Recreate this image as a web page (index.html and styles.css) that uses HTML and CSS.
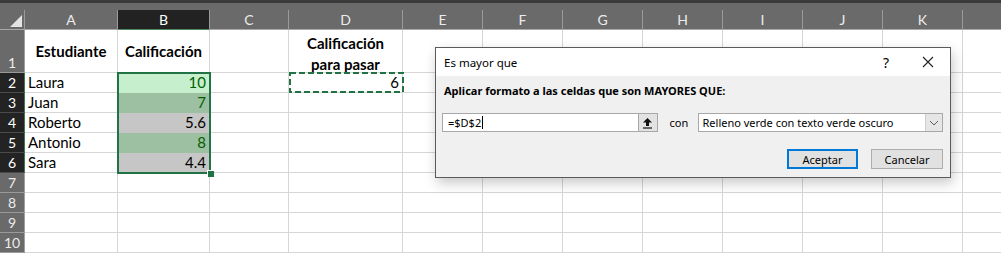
FILE: index.html
```html
<!DOCTYPE html>
<html>
<head>
<meta charset="utf-8">
<link rel="stylesheet" href="styles.css">
</head>
<body>
<div class="topbar"></div>
<div class="colheads">
  <div class="ch corner"><svg width="25" height="20" viewBox="0 0 25 20"><polygon points="10,17 22,17 22,5" fill="#e4e4e4"/></svg></div>
  <div class="ch">A</div>
  <div class="ch sel">B</div>
  <div class="ch">C</div>
  <div class="ch">D</div>
  <div class="ch">E</div>
  <div class="ch">F</div>
  <div class="ch">G</div>
  <div class="ch">H</div>
  <div class="ch">I</div>
  <div class="ch">J</div>
  <div class="ch">K</div>
  <div class="ch last"></div>
</div>
<div class="grid">
  <div class="rh r1">1</div>
  <div class="c bold mid">Estudiante</div>
  <div class="c bold mid">Calificación</div>
  <div class="c"></div>
  <div class="c bold mid wrap">Calificación para pasar</div>
  <div class="c"></div><div class="c"></div><div class="c"></div><div class="c"></div><div class="c"></div><div class="c"></div><div class="c"></div><div class="c last"></div>

  <div class="rh dark">2</div>
  <div class="c">Laura</div>
  <div class="c num g1">10</div>
  <div class="c"></div>
  <div class="c num">6</div>
  <div class="c"></div><div class="c"></div><div class="c"></div><div class="c"></div><div class="c"></div><div class="c"></div><div class="c"></div><div class="c last"></div>

  <div class="rh dark">3</div>
  <div class="c">Juan</div>
  <div class="c num g2">7</div>
  <div class="c"></div><div class="c"></div>
  <div class="c"></div><div class="c"></div><div class="c"></div><div class="c"></div><div class="c"></div><div class="c"></div><div class="c"></div><div class="c last"></div>

  <div class="rh dark">4</div>
  <div class="c">Roberto</div>
  <div class="c num gr">5.6</div>
  <div class="c"></div><div class="c"></div>
  <div class="c"></div><div class="c"></div><div class="c"></div><div class="c"></div><div class="c"></div><div class="c"></div><div class="c"></div><div class="c last"></div>

  <div class="rh dark">5</div>
  <div class="c">Antonio</div>
  <div class="c num g2">8</div>
  <div class="c"></div><div class="c"></div>
  <div class="c"></div><div class="c"></div><div class="c"></div><div class="c"></div><div class="c"></div><div class="c"></div><div class="c"></div><div class="c last"></div>

  <div class="rh dark">6</div>
  <div class="c">Sara</div>
  <div class="c num gr">4.4</div>
  <div class="c"></div><div class="c"></div>
  <div class="c"></div><div class="c"></div><div class="c"></div><div class="c"></div><div class="c"></div><div class="c"></div><div class="c"></div><div class="c last"></div>

  <div class="rh">7</div>
  <div class="c"></div><div class="c"></div><div class="c"></div><div class="c"></div>
  <div class="c"></div><div class="c"></div><div class="c"></div><div class="c"></div><div class="c"></div><div class="c"></div><div class="c"></div><div class="c last"></div>

  <div class="rh">8</div>
  <div class="c"></div><div class="c"></div><div class="c"></div><div class="c"></div>
  <div class="c"></div><div class="c"></div><div class="c"></div><div class="c"></div><div class="c"></div><div class="c"></div><div class="c"></div><div class="c last"></div>

  <div class="rh">9</div>
  <div class="c"></div><div class="c"></div><div class="c"></div><div class="c"></div>
  <div class="c"></div><div class="c"></div><div class="c"></div><div class="c"></div><div class="c"></div><div class="c"></div><div class="c"></div><div class="c last"></div>

  <div class="rh">10</div>
  <div class="c"></div><div class="c"></div><div class="c"></div><div class="c"></div>
  <div class="c"></div><div class="c"></div><div class="c"></div><div class="c"></div><div class="c"></div><div class="c"></div><div class="c"></div><div class="c last"></div>
</div>

<div class="selection"><div class="handle"></div></div>
<svg class="ants" width="115" height="21" viewBox="0 0 115 21"><rect x="1" y="1" width="113" height="19" fill="none" stroke="#217346" stroke-width="2" stroke-dasharray="6 3"/></svg>

<div class="dialog">
  <div class="title">
    <span class="title-text">Es mayor que</span>
    <span class="help">?</span>
    <svg class="close" width="12" height="12" viewBox="0 0 12 12"><path d="M1 1L11 11M11 1L1 11" stroke="#222" stroke-width="1.1" fill="none"/></svg>
  </div>
  <div class="dbody">
    <div class="label">Aplicar formato a las celdas que son MAYORES QUE:</div>
    <div class="inrow">
      <div class="input"><span>=$D$2</span><span class="caret"></span></div>
      <div class="refbtn"><svg width="11" height="12" viewBox="0 0 11 12"><path d="M5.5 1L10 5.5H7V9H4V5.5H1Z" fill="#111"/><path d="M1 11H10" stroke="#111" stroke-width="1.2"/></svg></div>
      <span class="con">con</span>
      <div class="select"><span>Relleno verde con texto verde oscuro</span><div class="arrow"><svg width="10" height="6" viewBox="0 0 10 6"><path d="M1 1L5 5L9 1" stroke="#606060" stroke-width="1" fill="none"/></svg></div></div>
    </div>
    <div class="btnrow">
      <div class="btn primary">Aceptar</div>
      <div class="btn">Cancelar</div>
    </div>
  </div>
</div>
</body>
</html>
```

FILE: styles.css
```css
* { box-sizing: border-box; }
html, body { margin: 0; padding: 0; }
body {
  width: 1001px;
  height: 253px;
  overflow: hidden;
  position: relative;
  background: #fff;
  font-family: Lato, "Liberation Sans", sans-serif;
}
.topbar {
  height: 3px;
  background: #3a3a3a;
}
.colheads {
  display: grid;
  grid-template-columns: 25px 93px 92px 79px 114px 80px 80px 80px 80px 80px 80px 80px 38px;
  background: #6a6a6a;
  padding-top: 7px;
  height: 27px;
}
.ch {
  height: 20px;
  border-right: 1px solid #9a9a9a;
  border-bottom: 1px solid #a8a8a8;
  color: #ececec;
  font-size: 14px;
  line-height: 19px;
  text-align: center;
}
.ch.corner svg { display: block; }
.ch.sel {
  background: #222;
  color: #fff;
  border-bottom: 1px solid #4f8a62;
}
.ch.last { border-right: none; }

.grid {
  display: grid;
  grid-template-columns: 25px 93px 92px 79px 114px 80px 80px 80px 80px 80px 80px 80px 38px;
  grid-template-rows: 43px repeat(9, 20px);
}
.rh {
  background: #6a6a6a;
  color: #ececec;
  font-size: 14px;
  text-align: center;
  line-height: 19px;
  border-bottom: 1px solid #9a9a9a;
  border-right: 1px solid #a0a0a0;
  display: flex;
  align-items: flex-end;
  justify-content: center;
}
.rh.dark {
  background: #232323;
  color: #fff;
  border-bottom-color: #4a4a4a;
  border-right-color: #3f7a52;
}
.c {
  border-right: 1px solid #d6d6d6;
  border-bottom: 1px solid #d6d6d6;
  font-size: 15px;
  line-height: 19px;
  color: #000;
  padding: 0 3px;
  white-space: nowrap;
  overflow: hidden;
  display: flex;
  align-items: flex-end;
}
.c.last { border-right: none; }
.c.bold { font-weight: 700; }
.c.mid { align-items: center; justify-content: center; text-align: center; }
.c.wrap { white-space: normal; line-height: 21px; padding-top: 5px; overflow: visible; }
.c.num { justify-content: flex-end; }
.g1 { background: #c6efce; color: #006100; border-color: #c6efce; }
.g2 { background: #9dbfa2; color: #006100; border-color: #9dbfa2; }
.gr { background: #c6c6c6; border-color: #c6c6c6; }

.selection {
  position: absolute;
  left: 117px;
  top: 72px;
  width: 94px;
  height: 102px;
  border: 2px solid #217346;
}
.handle {
  position: absolute;
  right: -5px;
  bottom: -5px;
  width: 7px;
  height: 7px;
  background: #217346;
  border-left: 1px solid #fff;
  border-top: 1px solid #fff;
}
.ants {
  position: absolute;
  left: 289px;
  top: 72px;
}

.dialog {
  position: absolute;
  left: 435px;
  top: 47px;
  width: 516px;
  height: 131px;
  border: 1px solid #5a5a5a;
  background: #f0f0f0;
  box-shadow: 2px 5px 12px rgba(0,0,0,0.22);
  display: flex;
  flex-direction: column;
  font-family: "Noto Sans", "Open Sans", sans-serif;
  font-size: 11px;
  color: #000;
}
.title {
  height: 28px;
  background: #fff;
  display: flex;
  align-items: center;
  padding-left: 8px;
}
.title-text { flex: 1; font-size: 11.5px; }
.help { font-size: 14px; width: 20px; text-align: center; margin-right: 26px; }
.close { margin: 0 16px 0 0; }
.dbody {
  flex: 1;
  padding: 8px 7px 0 6px;
  display: flex;
  flex-direction: column;
}
.label {
  font-weight: 700;
  font-size: 11px;
  line-height: 14px;
  padding-left: 2px;
}
.inrow {
  margin-top: 15px;
  display: flex;
  align-items: center;
  height: 19px;
}
.input {
  width: 196px;
  height: 19px;
  background: #fff;
  border: 1px solid #a8a8a8;
  border-right: none;
  display: flex;
  align-items: center;
  padding-left: 5px;
  font-size: 11px;
}
.caret {
  width: 1px;
  height: 13px;
  background: #000;
  margin-left: 1px;
}
.refbtn {
  width: 20px;
  height: 19px;
  background: #e2e2e2;
  border: 1px solid #a8a8a8;
  display: flex;
  align-items: center;
  justify-content: center;
}
.con {
  margin-left: 12px;
  width: 28px;
  font-size: 11px;
}
.select {
  width: 246px;
  height: 19px;
  background: #fff;
  border: 1px solid #a8a8a8;
  display: flex;
  align-items: center;
  padding-left: 4px;
  font-size: 11px;
}
.select span { flex: 1; }
.arrow {
  width: 17px;
  height: 17px;
  background: #e6e6e6;
  border-left: 1px solid #cfcfcf;
  display: flex;
  align-items: center;
  justify-content: center;
}
.btnrow {
  margin-top: 17px;
  display: flex;
  justify-content: flex-end;
  gap: 13px;
}
.btn {
  width: 72px;
  height: 20px;
  background: #e1e1e1;
  border: 1px solid #adadad;
  display: flex;
  align-items: center;
  justify-content: center;
  font-size: 11px;
}
.btn.primary {
  width: 71px;
  border: 2px solid #0078d7;
}
```
